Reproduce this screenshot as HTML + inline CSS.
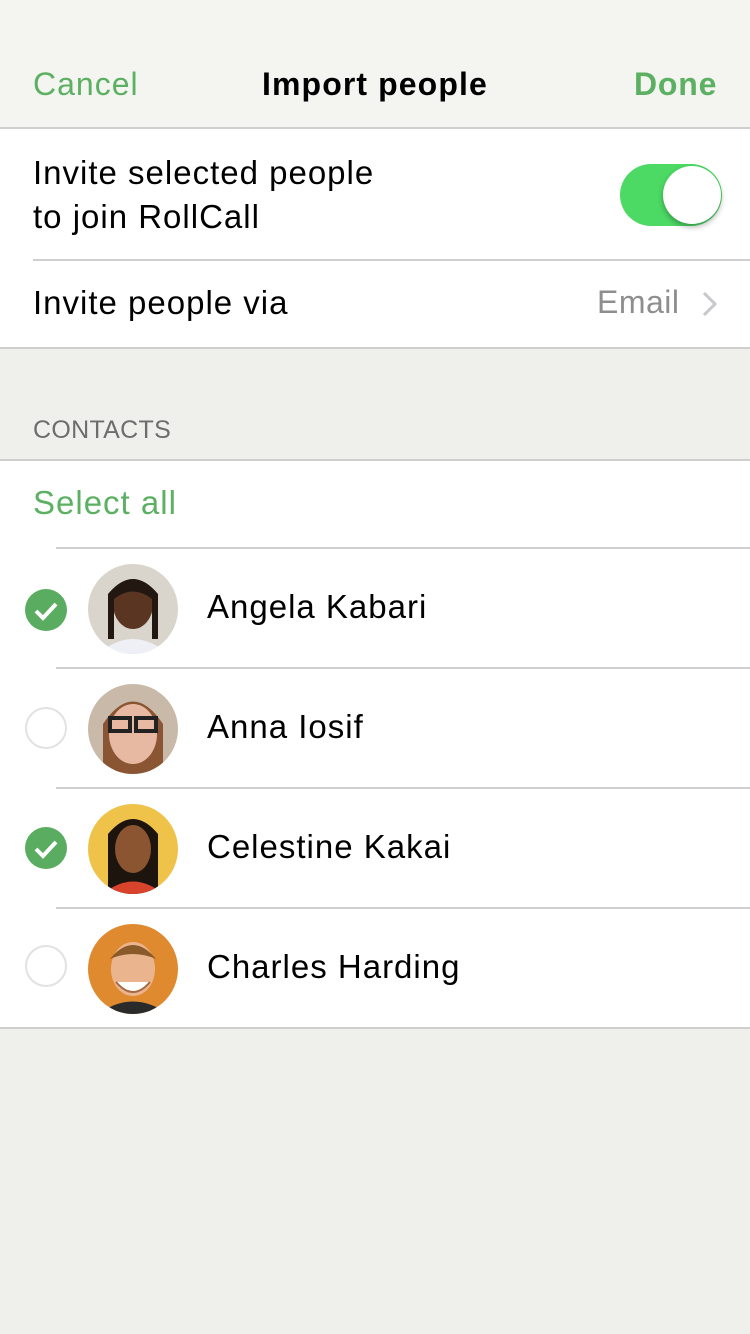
<!DOCTYPE html>
<html><head><meta charset="utf-8"><style>
*{margin:0;padding:0;box-sizing:border-box}
body{width:750px;height:1334px;background:#efefeb;font-family:"Liberation Sans",sans-serif;position:relative;overflow:hidden}
.a{position:absolute}
.line{position:absolute;height:2px;background:#cfcfcf}
.t{position:absolute;font-size:33px;letter-spacing:1px;color:#000;white-space:nowrap}
.g{color:#5cb062}
.chk{position:absolute;left:25px;width:42px;height:42px;border-radius:50%}
.on{background:#5aac60}
.off{border:2px solid #e2e2e2;background:#fff}
.av{position:absolute;left:88px;width:90px;height:90px;border-radius:50%;overflow:hidden}
</style></head><body>
<div class="a" style="left:0;top:0;width:750px;height:128px;background:#f4f4f1"></div>
<div class="t g" style="left:33px;top:66px;font-size:32px">Cancel</div>
<div class="t" style="left:262px;top:66px;font-weight:bold;font-size:32px;letter-spacing:1.1px">Import people</div>
<div class="t g" style="left:634px;top:66px;font-weight:bold;font-size:32px;letter-spacing:0.8px">Done</div>
<div class="line" style="left:0;top:127px;width:750px"></div>
<div class="a" style="left:0;top:129px;width:750px;height:219px;background:#fff"></div>
<div class="t" style="left:33px;top:151px;line-height:44px">Invite selected people<br>to join RollCall</div>
<div class="a" style="left:620px;top:164px;width:102px;height:62px;border-radius:31px;background:#4cd964"></div>
<div class="a" style="left:663px;top:166px;width:58px;height:58px;border-radius:50%;background:#fff;box-shadow:0 3px 6px rgba(0,0,0,.3)"></div>
<div class="line" style="left:33px;top:259px;width:717px"></div>
<div class="t" style="left:33px;top:284px">Invite people via</div>
<div class="t" style="left:597px;top:284px;color:#8e8e8e;font-size:32px;letter-spacing:0.5px">Email</div>
<svg class="a" style="left:700px;top:290px" width="20" height="28"><path d="M4 3l11 11-11 11" stroke="#c7c7cc" stroke-width="3" fill="none"/></svg>
<div class="line" style="left:0;top:347px;width:750px"></div>
<div class="t" style="left:33px;top:416px;font-size:25px;color:#6d6d6d;letter-spacing:0.3px">CONTACTS</div>
<div class="line" style="left:0;top:459px;width:750px"></div>
<div class="a" style="left:0;top:461px;width:750px;height:566px;background:#fff"></div>
<div class="t g" style="left:33px;top:484px">Select all</div>
<div class="line" style="left:56px;top:547px;width:694px"></div>
<div class="line" style="left:56px;top:667px;width:694px"></div>
<div class="line" style="left:56px;top:787px;width:694px"></div>
<div class="line" style="left:56px;top:907px;width:694px"></div>
<div class="line" style="left:0;top:1027px;width:750px"></div>

<div class="chk on" style="top:589px"><svg width="42" height="42"><path d="M11 22l7 7 13-14" stroke="#fff" stroke-width="4" fill="none"/></svg></div>
<div class="chk off" style="top:707px"></div>
<div class="chk on" style="top:827px"><svg width="42" height="42"><path d="M11 22l7 7 13-14" stroke="#fff" stroke-width="4" fill="none"/></svg></div>
<div class="chk off" style="top:945px"></div>

<div class="av" style="top:564px;background:#d9d4cc"><svg width="90" height="90"><ellipse cx="45" cy="40" rx="20" ry="25" fill="#5a3521"/><path d="M20 30q25-30 50 0v45h-6V35q-19-15-38 0v40h-6z" fill="#231712"/><path d="M10 90q35-30 70 0z" fill="#eef0f5"/></svg></div>
<div class="av" style="top:684px;background:#c9b9a8"><svg width="90" height="90"><path d="M15 90V40q30-45 60 0v50z" fill="#8a5533"/><ellipse cx="45" cy="50" rx="24" ry="30" fill="#e7b9a2"/><rect x="22" y="34" width="20" height="13" fill="none" stroke="#222" stroke-width="4"/><rect x="48" y="34" width="20" height="13" fill="none" stroke="#222" stroke-width="4"/></svg></div>
<div class="av" style="top:804px;background:#efc24a"><svg width="90" height="90"><path d="M20 90V30q25-30 50 0v60z" fill="#1e140e"/><ellipse cx="45" cy="45" rx="18" ry="24" fill="#8a5530"/><path d="M15 90q30-25 60 0z" fill="#d8432c"/></svg></div>
<div class="av" style="top:924px;background:#e08a30"><svg width="90" height="90"><ellipse cx="45" cy="45" rx="22" ry="27" fill="#eab58e"/><path d="M22 35q23-28 46 0q-23-10-46 0z" fill="#8b5a2b"/><path d="M28 58q17 20 34 0" fill="#fff" stroke="#a56a44" stroke-width="2"/><path d="M10 90q35-25 70 0z" fill="#2a2a2a"/></svg></div>

<div class="t" style="left:207px;top:588px">Angela Kabari</div>
<div class="t" style="left:207px;top:708px">Anna Iosif</div>
<div class="t" style="left:207px;top:828px">Celestine Kakai</div>
<div class="t" style="left:207px;top:948px">Charles Harding</div>
</body></html>
